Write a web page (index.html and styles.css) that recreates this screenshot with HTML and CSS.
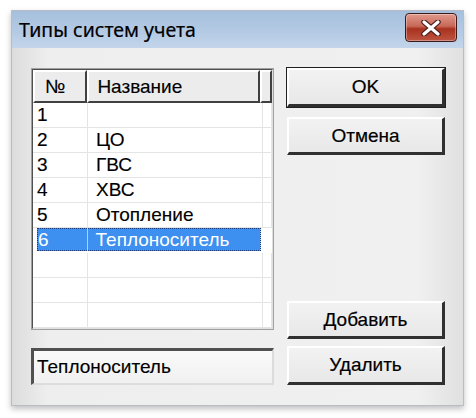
FILE: index.html
```html
<!DOCTYPE html>
<html lang="ru">
<head>
<meta charset="utf-8">
<title>Типы систем учета</title>
<link rel="stylesheet" href="styles.css">
</head>
<body>
<div class="window">
  <div class="titlebar">
    <span class="title">Типы систем учета</span>
    <button class="close" aria-label="Закрыть">
      <svg width="22" height="16" viewBox="0 0 22 16">
        <path d="M4 2 L18 14 M18 2 L4 14" stroke="#4a1a1a" stroke-width="5.5" stroke-linecap="round"/>
        <path d="M4 2 L18 14 M18 2 L4 14" stroke="#ffffff" stroke-width="3.2" stroke-linecap="round"/>
      </svg>
    </button>
  </div>
  <div class="client">
    <div class="left">
      <div class="grid">
        <div class="head">
          <div class="hcell c1">№</div>
          <div class="hcell c2">Название</div>
          <div class="hcell c3"></div>
        </div>
        <div class="row"><div class="cell c1">1</div><div class="cell c2"></div><div class="cell c3"></div></div>
        <div class="row"><div class="cell c1">2</div><div class="cell c2">ЦО</div><div class="cell c3"></div></div>
        <div class="row"><div class="cell c1">3</div><div class="cell c2">ГВС</div><div class="cell c3"></div></div>
        <div class="row"><div class="cell c1">4</div><div class="cell c2">ХВС</div><div class="cell c3"></div></div>
        <div class="row"><div class="cell c1">5</div><div class="cell c2">Отопление</div><div class="cell c3"></div></div>
        <div class="row selected"><div class="cell c1">6</div><div class="cell c2">Теплоноситель</div><div class="cell c3"></div></div>
        <div class="row"><div class="cell c1"></div><div class="cell c2"></div><div class="cell c3"></div></div>
        <div class="row"><div class="cell c1"></div><div class="cell c2"></div><div class="cell c3"></div></div>
        <div class="row"><div class="cell c1"></div><div class="cell c2"></div><div class="cell c3"></div></div>
      </div>
      <div class="field">Теплоноситель</div>
    </div>
    <div class="right">
      <button class="btn default">OK</button>
      <button class="btn">Отмена</button>
      <div class="spacer"></div>
      <button class="btn">Добавить</button>
      <button class="btn">Удалить</button>
    </div>
  </div>
</div>
</body>
</html>
```

FILE: styles.css
```css
html, body {
  margin: 0;
  padding: 0;
  background: #ffffff;
}
body {
  width: 476px;
  height: 418px;
  overflow: hidden;
  font-family: "Liberation Sans", Arial, sans-serif;
}
.window {
  margin: 10px 0 0 11px;
  width: 453px;
  height: 396px;
  background: linear-gradient(90deg, #dcdcdc 0%, #eeeeee 8%, #f0f0f0 90%, #e0e0e0 100%);
  border: 1px solid #b8bcc4;
  box-sizing: border-box;
  box-shadow: 0 3px 6px rgba(0,0,0,0.25);
  display: flex;
  flex-direction: column;
}
.titlebar {
  height: 37px;
  flex: none;
  background: linear-gradient(180deg, #a5bfdd 0%, #b5cbe5 60%, #c3d5ea 100%);
  display: flex;
  align-items: center;
  justify-content: space-between;
  padding: 0 6px 0 7px;
}
.title {
  font-family: "Noto Sans", "Open Sans", sans-serif;
  font-size: 19.5px;
  color: #000;
  -webkit-text-stroke: 0.2px #000;
  margin-top: -1px;
}
.close {
  width: 52px;
  height: 29px;
  margin-top: -4px;
  border: 1px solid #3b1a1a;
  border-radius: 4px;
  background: linear-gradient(180deg, #e09a8c 0%, #c86858 45%, #a8321f 55%, #bd5540 100%);
  box-shadow: inset 0 0 0 1px rgba(255,255,255,0.35);
  display: flex;
  align-items: center;
  justify-content: center;
  padding: 0;
}
.client {
  flex: 1;
  display: flex;
  padding: 20px 18px 20px 19px;
  gap: 13px;
}
.left {
  width: 243px;
  display: flex;
  flex-direction: column;
  gap: 18px;
}
.grid {
  height: 262px;
  flex: none;
  box-sizing: border-box;
  border-top: 2px solid #505050;
  border-left: 2px solid #505050;
  border-right: 2px solid #e0e0e0;
  border-bottom: 2px solid #e0e0e0;
  outline: 1px solid #a0a0a0;
  outline-offset: -1px;
  background: #ffffff;
  overflow: hidden;
  font-size: 19px;
  -webkit-text-stroke: 0.15px #000;
}
.head {
  display: flex;
  height: 33px;
  background: #ececec;
}
.hcell {
  box-sizing: border-box;
  border-top: 2px solid #ffffff;
  border-left: 2px solid #ffffff;
  border-right: 2px solid #404040;
  border-bottom: 2px solid #404040;
  display: flex;
  align-items: center;
  padding-left: 8px;
  color: #000;
}
.c1 { width: 55px; }
.c2 { width: 175px; }
.c3 { flex: 1; }
.hcell.c1 { padding-left: 10px; }
.row {
  display: flex;
  height: 25px;
}
.cell {
  box-sizing: border-box;
  border-right: 1px solid #e4e4e4;
  border-bottom: 1px solid #e4e4e4;
  display: flex;
  align-items: center;
  padding-left: 4px;
  color: #000;
}
.cell.c2 { padding-left: 8px; }
.row.selected {
  margin-left: 4px;
  width: 224px;
  height: 23px;
  margin-bottom: 2px;
  background: #3d8ff0;
  outline: 1px dotted #1a3a80;
  outline-offset: -1px;
  -webkit-text-stroke: 0;
}
.row.selected .cell { color: #ffffff; border-color: #b0d0ff; border-bottom: none; }
.row.selected .cell.c1 { width: 51px; padding-left: 1px; }
.row.selected .cell.c3 { display: none; }
.field {
  height: 37px;
  flex: none;
  box-sizing: border-box;
  border-top: 3px solid #505050;
  border-left: 3px solid #505050;
  border-right: 2px solid #dcdcdc;
  border-bottom: 2px solid #dcdcdc;
  background: linear-gradient(180deg, #fafafa, #f0f0f0);
  display: flex;
  align-items: center;
  padding-left: 3px;
  font-size: 19px;
  -webkit-text-stroke: 0.15px #000;
  color: #000;
}
.right {
  width: 158px;
  display: flex;
  flex-direction: column;
}
.btn {
  height: 38px;
  flex: none;
  box-sizing: border-box;
  border-top: 2px solid #ffffff;
  border-left: 2px solid #ffffff;
  border-right: 3px solid #303030;
  border-bottom: 3px solid #303030;
  background: linear-gradient(180deg, #f2f2f2 0%, #e8e8e8 100%);
  font-family: "Liberation Sans", Arial, sans-serif;
  font-size: 19px;
  -webkit-text-stroke: 0.2px #000;
  color: #000;
  padding: 0;
  margin-bottom: 10px;
}
.btn.default {
  height: 39px;
  outline: 1px solid #202020;
}
.spacer { flex: 1; }
.right .btn:nth-last-child(2) { margin-bottom: 7px; }
.right .btn:last-child { margin-bottom: 0; height: 39px; }
```
